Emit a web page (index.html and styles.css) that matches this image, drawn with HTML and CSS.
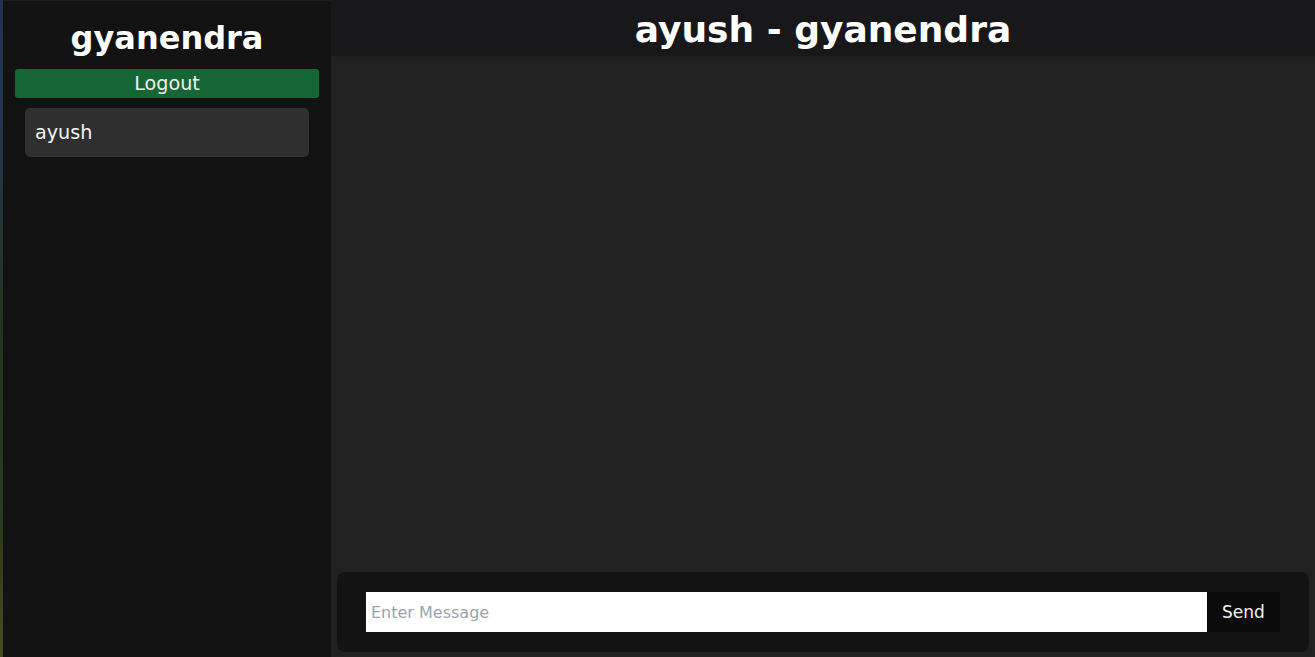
FILE: index.html
```html
<!DOCTYPE html>
<html>
<head>
<meta charset="utf-8">
<link rel="stylesheet" href="styles.css">
</head>
<body>
<div class="app">
  <aside class="sidebar">
    <h1 class="me">gyanendra</h1>
    <button class="logout">Logout</button>
    <ul class="users">
      <li class="user">ayush</li>
    </ul>
  </aside>
  <main class="chat">
    <header class="chat-head">ayush - gyanendra</header>
    <section class="messages"></section>
    <form class="composer">
      <input class="msg" type="text" placeholder="Enter Message">
      <button class="send" type="button">Send</button>
    </form>
  </main>
</div>
</body>
</html>
```
FILE: styles.css
```css
* { box-sizing: border-box; }
html, body { height: 100%; }
body {
  margin: 0;
  font-family: "DejaVu Sans", sans-serif;
  color: #fff;
  background: linear-gradient(180deg, #1d3350 0%, #22364f 15%, #26331f 50%, #2c3a1c 80%, #4a4a22 100%);
  overflow: hidden;
}
.app {
  display: flex;
  height: 657px;
  padding-left: 3px;
}
.sidebar {
  width: 328px;
  flex: none;
  background: #121212;
  padding: 12px 12px 0;
  display: flex;
  flex-direction: column;
  align-items: stretch;
  border-top: 1px solid #1c1c1c;
}
.me {
  margin: 0;
  font-size: 32px;
  line-height: 46px;
  font-weight: bold;
  text-align: center;
  height: 56px;
  padding-top: 2px;
}
.logout {
  height: 29px;
  background: #166534;
  color: #f0f0f0;
  border: none;
  border-radius: 3px;
  font-family: "DejaVu Sans", sans-serif;
  font-size: 19.2px;
  padding: 0;
  line-height: 29px;
}
.users {
  list-style: none;
  margin: 10px 0 0;
  padding: 0 10px;
}
.user {
  height: 49px;
  background: #2f2f2f;
  border-radius: 5px;
  padding: 0 10px;
  font-size: 19.2px;
  line-height: 50px;
  color: #f4f4f4;
}
.chat {
  flex: 1;
  display: flex;
  flex-direction: column;
  background: #212121;
  min-width: 0;
}
.chat-head {
  height: 57px;
  flex: none;
  background: #18181a;
  text-align: center;
  font-size: 36px;
  font-weight: bold;
  line-height: 60px;
  border-bottom: 1px solid #1f1f1f;
}
.messages { flex: 1; }
.composer {
  flex: none;
  margin: 0 6px 5px;
  height: 80px;
  background: #131313;
  border-radius: 8px;
  padding: 20px 29px;
  display: flex;
}
.msg {
  flex: 1;
  height: 40px;
  border: none;
  outline: none;
  background: #fff;
  font-family: "DejaVu Sans", sans-serif;
  font-size: 16px;
  padding: 0 5px;
  color: #222;
}
.msg::placeholder { color: #9ca3af; }
.send {
  width: 73px;
  height: 40px;
  border: none;
  background: #0b0b0b;
  color: #f2f2f2;
  font-family: "DejaVu Sans", sans-serif;
  font-size: 17px;
  padding: 0;
}
```
